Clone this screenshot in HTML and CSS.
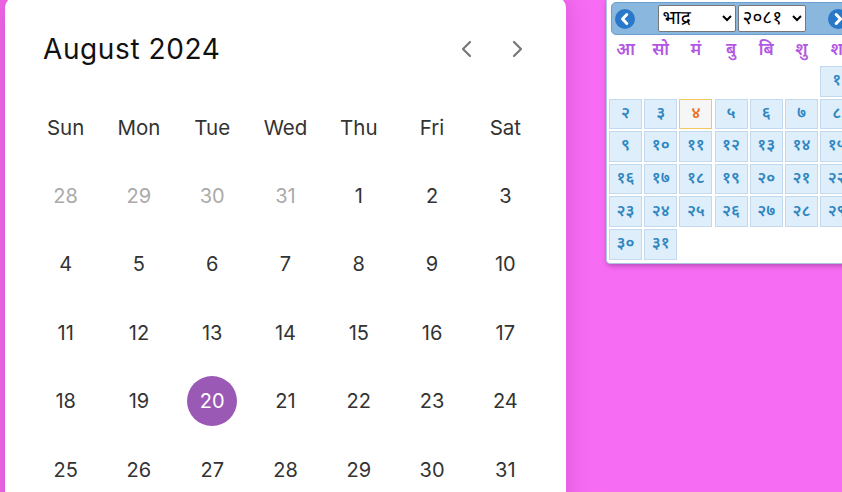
FILE: index.html
```html
<!DOCTYPE html>
<html>
<head>
    <title>Calendar</title>
    <link rel="stylesheet" href="styles.css">
</head>
<body>
    <div class="page">
        <div class="card">
            <div class="card-header">
                <h2 class="month-title">August 2024</h2>
                <div class="nav">
                    <button class="nav-btn" aria-label="Previous month">
                        <svg width="24" height="24" viewBox="0 0 24 24"><path d="M15 5 L8 12 L15 19" fill="none" stroke="#777" stroke-width="2.2" stroke-linecap="round" stroke-linejoin="round"/></svg>
                    </button>
                    <button class="nav-btn" aria-label="Next month">
                        <svg width="24" height="24" viewBox="0 0 24 24"><path d="M9 5 L16 12 L9 19" fill="none" stroke="#777" stroke-width="2.2" stroke-linecap="round" stroke-linejoin="round"/></svg>
                    </button>
                </div>
            </div>

            <div class="grid">
                <div class="weekday">Sun</div>
                <div class="weekday">Mon</div>
                <div class="weekday">Tue</div>
                <div class="weekday">Wed</div>
                <div class="weekday">Thu</div>
                <div class="weekday">Fri</div>
                <div class="weekday">Sat</div>

                <div class="day muted">28</div>
                <div class="day muted">29</div>
                <div class="day muted">30</div>
                <div class="day muted">31</div>
                <div class="day">1</div>
                <div class="day">2</div>
                <div class="day">3</div>

                <div class="day">4</div>
                <div class="day">5</div>
                <div class="day">6</div>
                <div class="day">7</div>
                <div class="day">8</div>
                <div class="day">9</div>
                <div class="day">10</div>

                <div class="day">11</div>
                <div class="day">12</div>
                <div class="day">13</div>
                <div class="day">14</div>
                <div class="day">15</div>
                <div class="day">16</div>
                <div class="day">17</div>

                <div class="day">18</div>
                <div class="day">19</div>
                <div class="day"><span class="selected">20</span></div>
                <div class="day">21</div>
                <div class="day">22</div>
                <div class="day">23</div>
                <div class="day">24</div>

                <div class="day">25</div>
                <div class="day">26</div>
                <div class="day">27</div>
                <div class="day">28</div>
                <div class="day">29</div>
                <div class="day">30</div>
                <div class="day">31</div>
            </div>
        </div>

        <div class="np-widget">
            <div class="np-header">
                <span class="np-arrow">
                    <svg width="20" height="20" viewBox="0 0 20 20"><circle cx="10" cy="10" r="10" fill="#2a78c8"/><path d="M11.8 5.5 L7.5 10 L11.8 14.5" fill="none" stroke="#fff" stroke-width="3" stroke-linecap="round" stroke-linejoin="round"/></svg>
                </span>
                <div class="np-selects">
                    <select class="np-select month"><option>भाद्र</option></select>
                    <select class="np-select year"><option>२०८१</option></select>
                </div>
                <span class="np-arrow">
                    <svg width="20" height="20" viewBox="0 0 20 20"><circle cx="10" cy="10" r="10" fill="#2a78c8"/><path d="M8.2 5.5 L12.5 10 L8.2 14.5" fill="none" stroke="#fff" stroke-width="3" stroke-linecap="round" stroke-linejoin="round"/></svg>
                </span>
            </div>

            <div class="np-grid">
                <div class="np-wd">आ</div>
                <div class="np-wd">सो</div>
                <div class="np-wd">मं</div>
                <div class="np-wd">बु</div>
                <div class="np-wd">बि</div>
                <div class="np-wd">शु</div>
                <div class="np-wd">श</div>

                <div></div><div></div><div></div><div></div><div></div><div></div>
                <div class="np-cell">१</div>

                <div class="np-cell">२</div>
                <div class="np-cell">३</div>
                <div class="np-cell today">४</div>
                <div class="np-cell">५</div>
                <div class="np-cell">६</div>
                <div class="np-cell">७</div>
                <div class="np-cell">८</div>

                <div class="np-cell">९</div>
                <div class="np-cell">१०</div>
                <div class="np-cell">११</div>
                <div class="np-cell">१२</div>
                <div class="np-cell">१३</div>
                <div class="np-cell">१४</div>
                <div class="np-cell">१५</div>

                <div class="np-cell">१६</div>
                <div class="np-cell">१७</div>
                <div class="np-cell">१८</div>
                <div class="np-cell">१९</div>
                <div class="np-cell">२०</div>
                <div class="np-cell">२१</div>
                <div class="np-cell">२२</div>

                <div class="np-cell">२३</div>
                <div class="np-cell">२४</div>
                <div class="np-cell">२५</div>
                <div class="np-cell">२६</div>
                <div class="np-cell">२७</div>
                <div class="np-cell">२८</div>
                <div class="np-cell">२९</div>

                <div class="np-cell">३०</div>
                <div class="np-cell">३१</div>
            </div>
        </div>
    </div>
</body>
</html>
```

FILE: styles.css
```css
body {
    margin: 0;
    height: 492px;
    overflow: hidden;
    background: linear-gradient(90deg, #f06ae9 0%, #f76cf3 40%, #f66cf2 100%);
    font-family: Inter, "Noto Sans", sans-serif;
}

.page {
    display: flex;
    align-items: flex-start;
    padding-left: 5px;
    gap: 40px;
}

/* main calendar */
.card {
    width: 561px;
    flex-shrink: 0;
    margin-top: -4px;
    padding: 33px 24px 24px;
    box-sizing: border-box;
    background: #fff;
    border-radius: 12px;
    box-shadow: 0 0 24px rgba(120, 0, 110, 0.22);
}

.card-header {
    display: flex;
    align-items: center;
    justify-content: space-between;
    height: 40px;
    padding: 0 13px 0 14px;
    margin-bottom: 24px;
}

.month-title {
    margin: 0;
    font-size: 28px;
    font-weight: 400;
    letter-spacing: 0.6px;
    color: #111;
}

.nav {
    display: flex;
    gap: 26px;
}

.nav-btn {
    border: none;
    background: none;
    padding: 0;
    width: 24px;
    height: 24px;
    cursor: pointer;
}

.grid {
    display: grid;
    grid-template-columns: repeat(7, 1fr);
    grid-auto-rows: 68.5px;
}

.weekday,
.day {
    display: flex;
    align-items: center;
    justify-content: center;
    font-size: 20px;
    color: #333;
}

.weekday {
    font-size: 20.5px;
}

.day.muted {
    color: #aaa;
}

.selected {
    display: flex;
    align-items: center;
    justify-content: center;
    width: 50px;
    height: 50px;
    border-radius: 50%;
    background: #9b59b6;
    color: #fff;
}

/* nepali widget */
.np-widget {
    width: 246px;
    flex-shrink: 0;
    margin-top: -1px;
    padding: 2px 2px 3px;
    background: #fff;
    border: 1px solid #a9c6e3;
    border-radius: 0 0 4px 4px;
    box-shadow: 1px 2px 5px rgba(60, 30, 80, 0.35);
    font-family: "Noto Sans Devanagari", "Lohit Devanagari", "Noto Sans", sans-serif;
}

.np-header {
    display: flex;
    align-items: center;
    justify-content: space-between;
    height: 31px;
    margin: 0 2px;
    padding: 0 4px 0 3px;
    background: #8ab7dd;
    border: 1px solid #6c9fcf;
    border-radius: 5px;
}

.np-arrow {
    display: flex;
    width: 20px;
    height: 20px;
}

.np-selects {
    display: flex;
    gap: 2px;
}

.np-select {
    height: 27px;
    font-size: 19px;
    font-family: inherit;
    color: #000;
    background: #fff;
    border: 1px solid #767676;
    border-radius: 2px;
}

.np-select.month {
    width: 78px;
}

.np-select.year {
    width: 68px;
}

.np-grid {
    display: grid;
    grid-template-columns: repeat(7, 33px);
    grid-template-rows: 26px;
    grid-auto-rows: 30.6px;
    column-gap: 2.2px;
    row-gap: 2px;
    margin-top: 3px;
}

.np-wd {
    display: flex;
    align-items: center;
    justify-content: center;
    font-size: 17px;
    font-weight: 600;
    color: #b257e3;
}

.np-cell {
    display: flex;
    align-items: center;
    justify-content: center;
    box-sizing: border-box;
    background: #dfeefb;
    border: 1px solid #c3d9ee;
    color: #2e86c1;
    font-size: 16.5px;
    font-weight: 600;
}

.np-cell.today {
    background: #f6f6f6;
    border-color: #f3c85e;
    color: #e8702a;
}
```
